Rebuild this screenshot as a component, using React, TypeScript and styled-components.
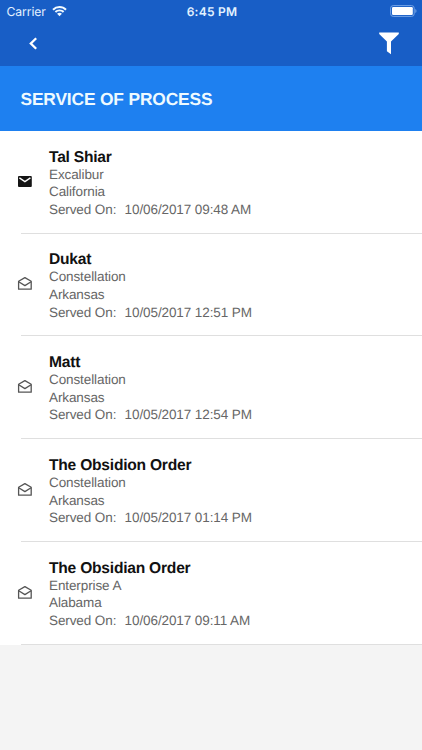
import React from "react";
import styled, { createGlobalStyle } from "styled-components";

const GlobalStyle = createGlobalStyle`
  * { box-sizing: border-box; }
  html, body { margin: 0; height: 100%; background: #f4f4f4; }
  #root { height: 100%; }
  svg { display: block; }
`;

const Screen = styled.div`
  display: flex;
  flex-direction: column;
  width: 100%;
  height: 750px;
  overflow: hidden;
  background: #f4f4f4;
  font-family: "Liberation Sans", Arial, sans-serif;
  text-rendering: geometricPrecision;
`;

const TopBar = styled.header`
  flex: none;
  height: 65.5px;
  background: #185ec6;
  color: #fff;
`;

const StatusBar = styled.div`
  display: grid;
  grid-template-columns: 1fr auto 1fr;
  align-items: center;
  height: 22px;
  padding: 0 4.5px 0 6.5px;
  font-family: Inter, sans-serif;
`;

const Carrier = styled.div`
  display: flex;
  align-items: center;
  gap: 5.8px;
  color: #e3f1ff;
  font-size: 12.2px;
  letter-spacing: -0.1px;
`;

const Clock = styled.div`
  color: #e3f2ff;
  font-size: 12px;
  font-weight: 600;
  letter-spacing: 0.25px;
`;

const BatterySlot = styled.div`
  justify-self: end;
  margin-top: -1px;
`;

const NavBar = styled.nav`
  display: flex;
  align-items: center;
  justify-content: space-between;
  height: 43px;
  padding: 0 23.5px 0 28px;
`;

const NavButton = styled.button`
  padding: 0;
  border: 0;
  background: none;
  color: #fff;
`;

const Banner = styled.div`
  flex: none;
  display: flex;
  align-items: center;
  height: 65.4px;
  padding: 2px 20.5px 0;
  background: #1e80f0;
`;

const Title = styled.h1`
  margin: 0;
  color: #eefaff;
  font-size: 17.4px;
  font-weight: 700;
  line-height: 20px;
  letter-spacing: -0.17px;
  white-space: nowrap;
`;

const List = styled.ul`
  margin: 0;
  padding: 0;
  list-style: none;
  background: #fff;
`;

const Item = styled.li`
  display: flex;
  height: 102.8px;
  padding-left: 17px;
`;

const MailSlot = styled.div<{ $unread: boolean }>`
  flex: none;
  width: 32px;
  padding-top: ${(p) => (p.$unread ? 44.5 : 42.7)}px;
  color: ${(p) => (p.$unread ? "#151515" : "#555")};
`;

const Details = styled.div`
  flex: 1;
  padding-top: 16.8px;
`;

const Divider = styled.div`
  height: 1px;
  margin: -1px 0 0 20.5px;
  background: #dfdfdf;
`;

const Name = styled.h2`
  margin: 0 0 -1px;
  color: #111;
  font-size: 15.6px;
  font-weight: 700;
  line-height: 19px;
  letter-spacing: -0.23px;
  white-space: nowrap;
`;

const Line = styled.div`
  display: flex;
  gap: 8.3px;
  color: #666;
  font-size: 13.5px;
  letter-spacing: -0.1px;
  line-height: 17.6px;
  white-space: nowrap;
`;

const WifiIcon = () => (
  <svg width="15" height="11" viewBox="0 0 15 11" fill="#f2fbff">
    <path d="M7.5 0C10.3 0 12.8 1.1 14.7 2.9L13.3 4.4A8.4 8.4 0 0 0 1.7 4.4L.3 2.9A10.4 10.4 0 0 1 7.5 0Z" />
    <path d="M7.5 3.4C9.4 3.4 11.1 4.1 12.3 5.3L10.9 6.7A4.9 4.9 0 0 0 4.1 6.7L2.7 5.3A6.9 6.9 0 0 1 7.5 3.4Z" />
    <path d="M7.5 6.7C8.5 6.7 9.3 7.1 9.9 7.7L7.5 10.2 5.1 7.7C5.7 7.1 6.5 6.7 7.5 6.7Z" />
  </svg>
);

const BatteryIcon = () => (
  <svg width="28" height="12" viewBox="0 0 28 12">
    <rect x=".6" y=".6" width="23.6" height="10.8" rx="2.6" fill="none" stroke="#74a4e7" strokeWidth="1" />
    <rect x="2" y="2" width="20.8" height="8" rx="1.2" fill="#fff" />
    <path d="M25.3 4C26.9 4.5 26.9 7.5 25.3 8Z" fill="#74a4e7" />
  </svg>
);

const BackIcon = () => (
  <svg width="10" height="14" viewBox="0 0 10 14" fill="none" stroke="currentColor" strokeWidth="2.3">
    <path d="M8.2 1.2 2.8 6.5 8.2 11.8" />
  </svg>
);

const FilterIcon = () => (
  <svg width="20" height="23" viewBox="0 0 20 23" fill="currentColor">
    <path d="M.2 .5H19.8V2L12 9.6V22.3L7.9 19.2V9.6L.2 2Z" />
  </svg>
);

const UnreadIcon = () => (
  <svg width="16" height="14" viewBox="0 0 16 14">
    <rect x="1" y="1" width="13.8" height="11" rx="1" fill="currentColor" />
    <path d="M2.4 2.9 7.9 6.6 13.4 2.9" fill="none" stroke="#fff" strokeWidth="1.35" />
  </svg>
);

const ReadIcon = () => (
  <svg width="16" height="16" viewBox="0 0 16 16" fill="none" stroke="currentColor" strokeWidth="1.3" strokeLinejoin="round">
    <path d="M1.6 5.3 7.9 1.6 14.2 5.3V13.2H1.6Z" />
    <path d="M1.7 5.8 7.9 9.6 14.1 5.8" />
  </svg>
);

interface Notice {
  name: string;
  company: string;
  state: string;
  served: string;
  unread: boolean;
}

const notices: Notice[] = [
  { name: "Tal Shiar", company: "Excalibur", state: "California", served: "10/06/2017 09:48 AM", unread: true },
  { name: "Dukat", company: "Constellation", state: "Arkansas", served: "10/05/2017 12:51 PM", unread: false },
  { name: "Matt", company: "Constellation", state: "Arkansas", served: "10/05/2017 12:54 PM", unread: false },
  { name: "The Obsidion Order", company: "Constellation", state: "Arkansas", served: "10/05/2017 01:14 PM", unread: false },
  { name: "The Obsidian Order", company: "Enterprise A", state: "Alabama", served: "10/06/2017 09:11 AM", unread: false },
];

export default function App() {
  return (
    <Screen>
      <GlobalStyle />
      <TopBar>
        <StatusBar>
          <Carrier>
            <span>Carrier</span>
            <WifiIcon />
          </Carrier>
          <Clock>6:45 PM</Clock>
          <BatterySlot>
            <BatteryIcon />
          </BatterySlot>
        </StatusBar>
        <NavBar>
          <NavButton aria-label="Back">
            <BackIcon />
          </NavButton>
          <NavButton aria-label="Filter">
            <FilterIcon />
          </NavButton>
        </NavBar>
      </TopBar>
      <Banner>
        <Title>SERVICE OF PROCESS</Title>
      </Banner>
      <List>
        {notices.map((n) => (
          <React.Fragment key={n.name}>
            <Item>
              <MailSlot $unread={n.unread}>{n.unread ? <UnreadIcon /> : <ReadIcon />}</MailSlot>
              <Details>
                <Name>{n.name}</Name>
                <Line>{n.company}</Line>
                <Line>{n.state}</Line>
                <Line>
                  <span>Served On:</span>
                  <span>{n.served}</span>
                </Line>
              </Details>
            </Item>
            <Divider as="li" role="separator" />
          </React.Fragment>
        ))}
      </List>
    </Screen>
  );
}
